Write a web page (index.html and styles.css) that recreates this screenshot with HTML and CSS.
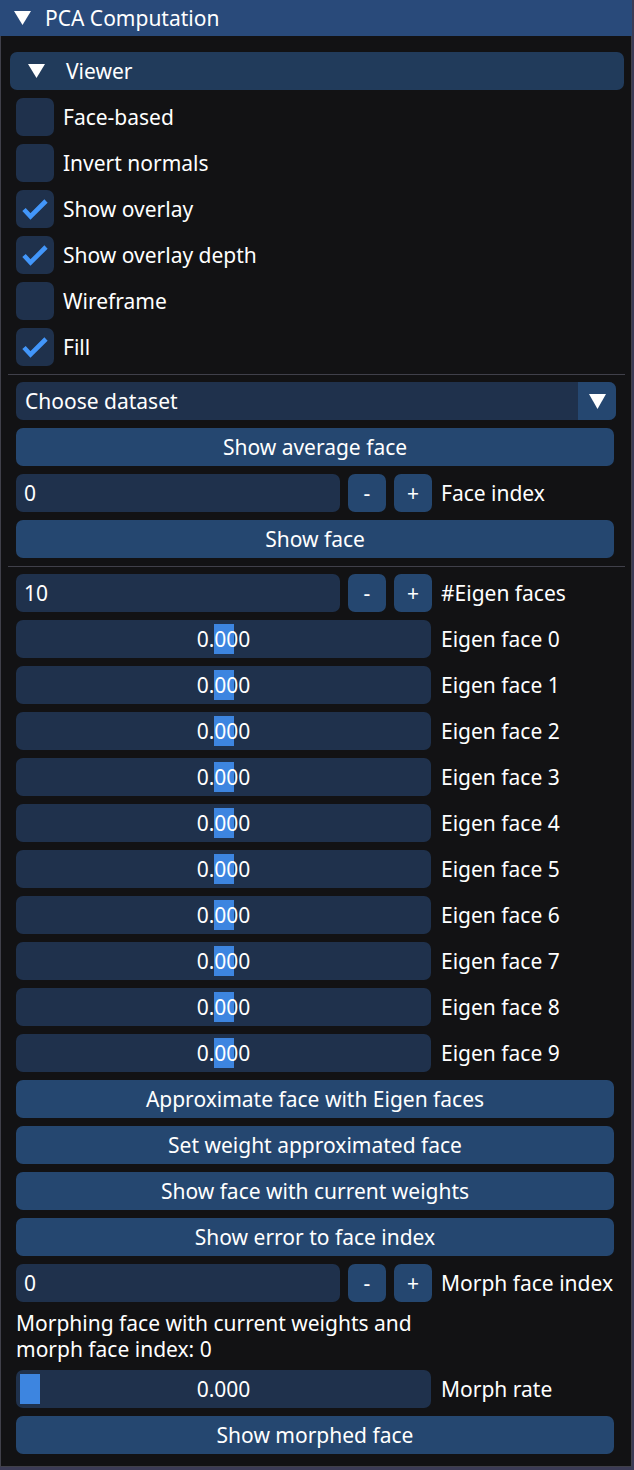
FILE: index.html
```html
<!DOCTYPE html>
<html>
<head>
<meta charset="utf-8">
<link rel="stylesheet" href="styles.css">
</head>
<body>
<div class="window">
  <div class="titlebar">
    <svg class="tri" width="17" height="14" viewBox="0 0 17 14"><polygon points="0,0 17,0 8.5,14" fill="#fff"/></svg>
    <span>PCA Computation</span>
  </div>
  <div class="content">
    <div class="header">
      <svg class="tri" width="17" height="14" viewBox="0 0 17 14"><polygon points="0,0 17,0 8.5,14" fill="#fff"/></svg>
      <span>Viewer</span>
    </div>

    <div class="check-row"><span class="box"></span><span class="label">Face-based</span></div>
    <div class="check-row"><span class="box"></span><span class="label">Invert normals</span></div>
    <div class="check-row"><span class="box"><svg width="38" height="38" viewBox="0 0 38 38"><polyline points="8,19.5 14.5,26.5 30,11" fill="none" stroke="#4296fa" stroke-width="4.6" stroke-linejoin="miter" stroke-linecap="butt"/></svg></span><span class="label">Show overlay</span></div>
    <div class="check-row"><span class="box"><svg width="38" height="38" viewBox="0 0 38 38"><polyline points="8,19.5 14.5,26.5 30,11" fill="none" stroke="#4296fa" stroke-width="4.6" stroke-linejoin="miter" stroke-linecap="butt"/></svg></span><span class="label">Show overlay depth</span></div>
    <div class="check-row"><span class="box"></span><span class="label">Wireframe</span></div>
    <div class="check-row"><span class="box"><svg width="38" height="38" viewBox="0 0 38 38"><polyline points="8,19.5 14.5,26.5 30,11" fill="none" stroke="#4296fa" stroke-width="4.6" stroke-linejoin="miter" stroke-linecap="butt"/></svg></span><span class="label">Fill</span></div>

    <div class="sep"></div>

    <div class="combo">
      <span class="combo-text">Choose dataset</span>
      <span class="combo-arrow"><svg width="17" height="15" viewBox="0 0 17 15"><polygon points="0,0 17,0 8.5,15" fill="#fff"/></svg></span>
    </div>
    <div class="button">Show average face</div>
    <div class="input-row">
      <span class="input">0</span>
      <span class="step">-</span>
      <span class="step">+</span>
      <span class="label">Face index</span>
    </div>
    <div class="button">Show face</div>

    <div class="sep"></div>

    <div class="input-row">
      <span class="input">10</span>
      <span class="step">-</span>
      <span class="step">+</span>
      <span class="label">#Eigen faces</span>
    </div>

    <div class="slider-row"><div class="slider"><span class="grab" style="left:197.5px"></span><span class="value">0.000</span></div><span class="label">Eigen face 0</span></div>
    <div class="slider-row"><div class="slider"><span class="grab" style="left:197.5px"></span><span class="value">0.000</span></div><span class="label">Eigen face 1</span></div>
    <div class="slider-row"><div class="slider"><span class="grab" style="left:197.5px"></span><span class="value">0.000</span></div><span class="label">Eigen face 2</span></div>
    <div class="slider-row"><div class="slider"><span class="grab" style="left:197.5px"></span><span class="value">0.000</span></div><span class="label">Eigen face 3</span></div>
    <div class="slider-row"><div class="slider"><span class="grab" style="left:197.5px"></span><span class="value">0.000</span></div><span class="label">Eigen face 4</span></div>
    <div class="slider-row"><div class="slider"><span class="grab" style="left:197.5px"></span><span class="value">0.000</span></div><span class="label">Eigen face 5</span></div>
    <div class="slider-row"><div class="slider"><span class="grab" style="left:197.5px"></span><span class="value">0.000</span></div><span class="label">Eigen face 6</span></div>
    <div class="slider-row"><div class="slider"><span class="grab" style="left:197.5px"></span><span class="value">0.000</span></div><span class="label">Eigen face 7</span></div>
    <div class="slider-row"><div class="slider"><span class="grab" style="left:197.5px"></span><span class="value">0.000</span></div><span class="label">Eigen face 8</span></div>
    <div class="slider-row"><div class="slider"><span class="grab" style="left:197.5px"></span><span class="value">0.000</span></div><span class="label">Eigen face 9</span></div>

    <div class="button">Approximate face with Eigen faces</div>
    <div class="button">Set weight approximated face</div>
    <div class="button">Show face with current weights</div>
    <div class="button">Show error to face index</div>

    <div class="input-row">
      <span class="input">0</span>
      <span class="step">-</span>
      <span class="step">+</span>
      <span class="label">Morph face index</span>
    </div>

    <div class="text-block">Morphing face with current weights and<br>morph face index: 0</div>

    <div class="slider-row"><div class="slider"><span class="grab" style="left:4px"></span><span class="value">0.000</span></div><span class="label">Morph rate</span></div>

    <div class="button">Show morphed face</div>
  </div>
</div>
</body>
</html>
```

FILE: styles.css
```css
html, body {
  margin: 0;
  padding: 0;
}

body {
  background: #3b3b56;
  font-family: "Noto Sans", "Open Sans", sans-serif;
  font-size: 21px;
  color: #ffffff;
  width: 634px;
  height: 1470px;
  overflow: hidden;
}

.window {
  width: 632px;
  height: 1467px;
  box-sizing: border-box;
  background: #121214;
  border: 1px solid #40404a;
  border-top: 0;
}

.titlebar {
  height: 36px;
  background: #294a7a;
  display: flex;
  align-items: center;
  padding-left: 13px;
  gap: 14px;
  margin: 0 -1px 0 -1px;
  line-height: 36px;
}

.titlebar .tri {
  margin-left: 1px;
}

.content {
  padding: 16px 7px 12px 9px;
  display: flex;
  flex-direction: column;
  gap: 8px;
}

.header {
  height: 38px;
  background: #213b5b;
  border-radius: 7px;
  display: flex;
  align-items: center;
  padding-left: 18px;
  gap: 21px;
}

.check-row {
  height: 38px;
  margin-left: 6px;
  display: flex;
  align-items: center;
}

.box {
  width: 38px;
  height: 38px;
  border-radius: 7px;
  background: #1f314c;
  flex: none;
  display: block;
}

.box svg {
  display: block;
}

.check-row .label {
  margin-left: 9px;
}

.sep {
  height: 1px;
  background: #40404a;
  margin: 0 -1px -1px -2px;
}

.combo {
  margin-left: 6px;
  width: 600px;
  height: 38px;
  display: flex;
  border-radius: 7px;
  overflow: hidden;
  background: #1f314c;
}

.combo-text {
  flex: 1;
  padding-left: 9px;
  line-height: 38px;
}

.combo-arrow {
  width: 38px;
  background: #254770;
  display: flex;
  align-items: center;
  justify-content: center;
}

.button {
  margin-left: 6px;
  width: 598px;
  height: 38px;
  line-height: 38px;
  text-align: center;
  background: #254770;
  border-radius: 7px;
}

.input-row {
  margin-left: 6px;
  height: 38px;
  display: flex;
  align-items: center;
}

.input {
  width: 324px;
  height: 38px;
  line-height: 38px;
  box-sizing: border-box;
  padding-left: 8px;
  background: #1f314c;
  border-radius: 7px;
}

.step {
  width: 38px;
  height: 38px;
  line-height: 38px;
  margin-left: 8px;
  text-align: center;
  background: #254770;
  border-radius: 7px;
}

.input-row .label {
  margin-left: 9px;
}

.slider-row {
  margin-left: 6px;
  height: 38px;
  display: flex;
  align-items: center;
}

.slider {
  position: relative;
  width: 415px;
  height: 38px;
  background: #1f314c;
  border-radius: 7px;
  text-align: center;
  line-height: 38px;
}

.grab {
  position: absolute;
  top: 4px;
  bottom: 4px;
  width: 20px;
  background: #3d85e0;
}

.value {
  position: relative;
}

.slider-row .label {
  margin-left: 10px;
}

.text-block {
  margin-left: 6px;
  line-height: 26px;
  height: 52px;
}
```
